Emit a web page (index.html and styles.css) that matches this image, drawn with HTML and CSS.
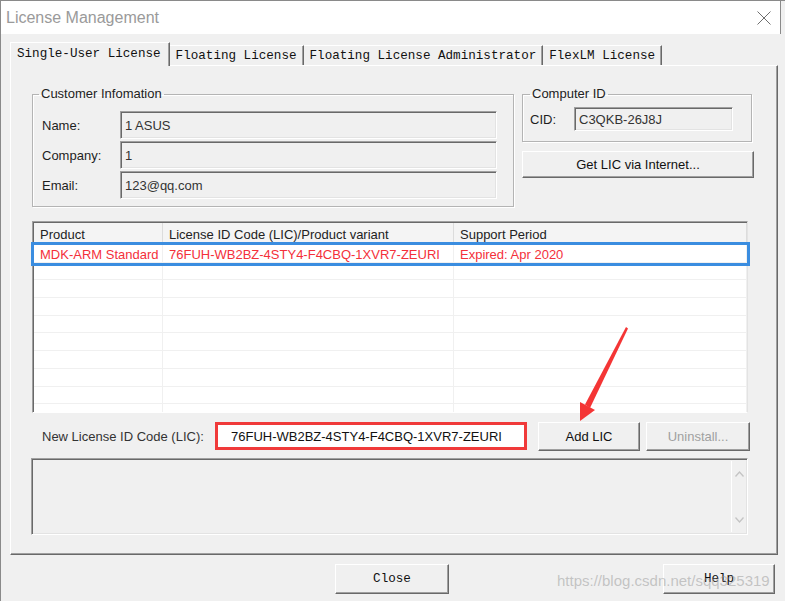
FILE: index.html
```html
<!DOCTYPE html>
<html lang="en">
<head>
    <meta charset="UTF-8">
    <title>License Management</title>
    <link rel="stylesheet" href="styles.css">
</head>
<body>
    <div class="window">
        <!-- Title Bar -->
        <div class="titlebar">
            <span class="title">License Management</span>
            <svg class="close-x" width="14" height="14" viewBox="0 0 14 14">
                <path d="M0.5 0.5 L13.5 13.5 M13.5 0.5 L0.5 13.5" stroke="#6e6e6e" stroke-width="1" fill="none"/>
            </svg>
        </div>

        <div class="client">
            <!-- Tabs -->
            <div class="tabs">
                <div class="tab active">Single-User License</div>
                <div class="tab">Floating License</div>
                <div class="tab">Floating License Administrator</div>
                <div class="tab">FlexLM License</div>
            </div>

            <div class="panel">
                <div class="top-row">
                    <fieldset class="group customer">
                        <legend>Customer Infomation</legend>
                        <div class="field-row"><label>Name:</label><div class="edit">1 ASUS</div></div>
                        <div class="field-row"><label>Company:</label><div class="edit">1</div></div>
                        <div class="field-row"><label>Email:</label><div class="edit">123@qq.com</div></div>
                    </fieldset>

                    <div class="side">
                        <fieldset class="group computer">
                            <legend>Computer ID</legend>
                            <div class="field-row"><label>CID:</label><div class="edit">C3QKB-26J8J</div></div>
                        </fieldset>
                        <div class="btn get-lic">Get LIC via Internet...</div>
                    </div>
                </div>

                <!-- License list -->
                <div class="listview">
                    <div class="lv-head">
                        <div class="cell">Product</div>
                        <div class="cell">License ID Code (LIC)/Product variant</div>
                        <div class="cell">Support Period</div>
                    </div>
                    <div class="lv-body">
                        <div class="lv-row expired">
                            <div class="cell">MDK-ARM Standard</div>
                            <div class="cell">76FUH-WB2BZ-4STY4-F4CBQ-1XVR7-ZEURI</div>
                            <div class="cell">Expired: Apr 2020</div>
                        </div>
                        <div class="lv-row"><div class="cell"></div><div class="cell"></div><div class="cell"></div></div>
                        <div class="lv-row"><div class="cell"></div><div class="cell"></div><div class="cell"></div></div>
                        <div class="lv-row"><div class="cell"></div><div class="cell"></div><div class="cell"></div></div>
                        <div class="lv-row"><div class="cell"></div><div class="cell"></div><div class="cell"></div></div>
                        <div class="lv-row"><div class="cell"></div><div class="cell"></div><div class="cell"></div></div>
                        <div class="lv-row"><div class="cell"></div><div class="cell"></div><div class="cell"></div></div>
                        <div class="lv-row"><div class="cell"></div><div class="cell"></div><div class="cell"></div></div>
                        <div class="lv-row"><div class="cell"></div><div class="cell"></div><div class="cell"></div></div>
                        <div class="lv-row last"><div class="cell"></div><div class="cell"></div><div class="cell"></div></div>
                    </div>
                </div>

                <!-- New LIC -->
                <div class="lic-row">
                    <label>New License ID Code (LIC):</label>
                    <div class="lic-input">76FUH-WB2BZ-4STY4-F4CBQ-1XVR7-ZEURI</div>
                    <div class="btn add">Add LIC</div>
                    <div class="btn uninstall disabled">Uninstall...</div>
                </div>

                <!-- Output box -->
                <div class="output">
                    <div class="scroll">
                        <svg width="9" height="6" viewBox="0 0 9 6"><polyline points="0.5,5.5 4.5,1 8.5,5.5" fill="none" stroke="#c4c4c4" stroke-width="1.3"/></svg>
                        <svg width="9" height="6" viewBox="0 0 9 6"><polyline points="0.5,0.5 4.5,5 8.5,0.5" fill="none" stroke="#c4c4c4" stroke-width="1.3"/></svg>
                    </div>
                </div>
            </div>

            <!-- Bottom buttons -->
            <div class="bottom">
                <div class="btn mono close">Close</div>
                <div class="btn mono help">Help</div>
            </div>
        </div>

        <!-- annotation arrow -->
        <svg class="arrow" width="785" height="601" viewBox="0 0 785 601">
            <polygon points="626,327 628,328.5 590,408 585,404.5" fill="#f43535"/>
            <polygon points="580,402 595,410 580,421" fill="#f43535"/>
        </svg>

        <div class="watermark">https://blog.csdn.net/sqq325319</div>
    </div>
</body>
</html>
```

FILE: styles.css
```css
* {
    box-sizing: border-box;
}

body {
    margin: 0;
    font-family: 'Liberation Sans', Arial, sans-serif;
    font-size: 13px;
    color: #1e1e1e;
    background-color: #f0f0f0;
}

.window {
    position: relative;
    width: 785px;
    height: 601px;
    display: flex;
    flex-direction: column;
    border-left: 1px solid #8a8a8a;
    border-top: 1px solid #8a8a8a;
    overflow: hidden;
}

/* Title Bar */
.titlebar {
    height: 33px;
    background: #fff;
    margin-right: 4px;
    border-right: 1px solid #8a8a8a;
    display: flex;
    align-items: center;
    justify-content: space-between;
    padding: 0 9px 0 5px;
}

.title {
    font-size: 16px;
    color: #9a9a9a;
}

.close-x {
    margin-top: 1px;
}

/* Client area */
.client {
    flex: 1;
    padding: 8px 7px 0 9px;
    display: flex;
    flex-direction: column;
}

/* Tabs */
.tabs {
    display: flex;
    align-items: flex-end;
    height: 23px;
    position: relative;
    z-index: 1;
}

.tab {
    height: 20px;
    padding: 0 6px;
    font-family: 'Liberation Mono', monospace;
    font-size: 12.6px;
    line-height: 21px;
    color: #111;
    border-top: 1px solid #fff;
    border-right: 1px solid #696969;
    box-shadow: inset -1px 0 0 #a0a0a0;
    background: #f0f0f0;
    white-space: nowrap;
}

.tab.active {
    height: 24px;
    margin-bottom: -1px;
    padding: 0 8px 0 6px;
    border-left: 1px solid #fff;
    line-height: 23px;
}

/* Panel */
.panel {
    width: 768px;
    height: 490px;
    border: 1px solid;
    border-color: #fff #696969 #696969 #fff;
    box-shadow: inset -1px -1px 0 #a0a0a0;
    padding: 20px 0 0 21px;
    display: flex;
    flex-direction: column;
}

.top-row {
    display: flex;
    align-items: flex-start;
    gap: 8px;
}

.group {
    margin: 0;
    border: 1px solid #b4b4b4;
    box-shadow: inset 1px 1px 0 #fff, 1px 1px 0 #fff;
}

.group legend {
    padding: 0 2px;
    line-height: 16px;
    color: #222;
}

.customer {
    width: 482px;
    padding: 9px 15px 7px 9px;
}

.customer legend {
    margin-left: -3px;
}

.field-row {
    display: flex;
    align-items: center;
}

.customer .field-row + .field-row {
    margin-top: 2px;
}

.customer label {
    width: 78px;
}

.customer .edit {
    width: 377px;
    height: 28px;
}

.edit {
    background: #f0f0f0;
    border: 1px solid;
    border-color: #a0a0a0 #fff #fff #a0a0a0;
    box-shadow: inset 1px 1px 0 #696969, inset -1px -1px 0 #e3e3e3;
    padding: 0 4px;
    display: flex;
    align-items: center;
    color: #333;
}

.side {
    width: 232px;
    display: flex;
    flex-direction: column;
}

.computer {
    width: 230px;
    padding: 5px 9px 10px 7px;
}

.computer label {
    width: 44px;
}

.computer .edit {
    width: 159px;
    height: 24px;
}

/* Buttons */
.btn {
    background: #f0f0f0;
    border: 1px solid;
    border-color: #fff #696969 #696969 #fff;
    box-shadow: inset -1px -1px 0 #a0a0a0;
    display: flex;
    align-items: center;
    justify-content: center;
    color: #111;
}

.btn.disabled {
    color: #a0a0a0;
}

.get-lic {
    margin-top: 9px;
    width: 232px;
    height: 27px;
}

/* List view */
.listview {
    margin-top: 14px;
    width: 716px;
    height: 192px;
    background: #fff;
    border: 1px solid;
    border-color: #a0a0a0 #e3e3e3 #fff #a0a0a0;
    box-shadow: inset 1px 1px 0 #696969;
    padding: 1px 0 0 1px;
    display: flex;
    flex-direction: column;
}

.lv-head,
.lv-row {
    display: grid;
    grid-template-columns: 129px 291px 1fr;
}

.lv-head {
    height: 22px;
    background: #f4f4f4;
    color: #222;
}

.lv-head .cell {
    border-right: 1px solid #dcdcdc;
    padding-left: 6px;
    line-height: 23px;
}

.lv-body {
    flex: 1;
    display: flex;
    flex-direction: column;
}

.lv-row {
    height: 17.7px;
    border-bottom: 1px solid #f0f0f0;
}

.lv-row.last {
    flex: 1;
    border-bottom: none;
}

.lv-row .cell {
    border-right: 1px solid #f0f0f0;
    padding-left: 6px;
    line-height: 19px;
    white-space: nowrap;
}

.lv-row.expired {
    color: #f4303a;
    outline: 3px solid #3a8de0;
    position: relative;
    z-index: 1;
}

/* New LIC row */
.lic-row {
    margin-top: 8px;
    height: 30px;
    display: flex;
    align-items: center;
}

.lic-row label {
    width: 183px;
    padding-left: 10px;
    color: #333;
}

.lic-input {
    width: 312px;
    height: 28px;
    border: 3px solid #f03a3a;
    background: #fff;
    padding-left: 13px;
    display: flex;
    align-items: center;
    color: #111;
}

.add {
    margin-left: 11px;
    width: 102px;
    height: 29px;
}

.uninstall {
    margin-left: 6px;
    width: 104px;
    height: 29px;
}

/* Output box */
.output {
    margin-top: 7px;
    margin-left: -1px;
    width: 717px;
    height: 77px;
    border: 1px solid;
    border-color: #a0a0a0 #fff #fff #a0a0a0;
    box-shadow: inset 1px 1px 0 #696969, inset -1px -1px 0 #e3e3e3;
    display: flex;
    justify-content: flex-end;
    padding: 2px 1px 2px 0;
}

.output .scroll {
    width: 15px;
    border-left: 1px solid #fff;
    display: flex;
    flex-direction: column;
    align-items: center;
    justify-content: space-between;
    padding: 10px 0 9px;
}

/* Bottom buttons */
.bottom {
    margin-top: 9px;
    display: flex;
    padding-left: 325px;
}

.btn.mono {
    font-family: 'Liberation Mono', monospace;
    font-size: 12.6px;
    height: 30px;
}

.close {
    width: 114px;
}

.help {
    width: 112px;
    margin-left: auto;
    margin-right: 3px;
}

/* Overlays */
.arrow {
    position: absolute;
    left: -1px;
    top: -1px;
    pointer-events: none;
    z-index: 5;
}

.watermark {
    position: absolute;
    left: 556px;
    top: 571px;
    font-size: 15px;
    color: rgba(150, 150, 150, 0.5);
    z-index: 6;
    white-space: nowrap;
}
```
